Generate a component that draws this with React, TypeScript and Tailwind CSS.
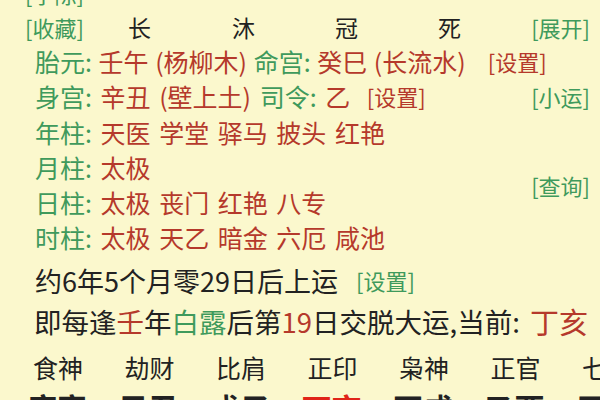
import React from "react";

const G = "text-[#3f9a5c]";
const R = "text-[#b5392b]";
const K = "text-[#222222]";

function Label({ children }: { children: React.ReactNode }) {
  return <span className={G}>{children}</span>;
}

function Red({ children }: { children: React.ReactNode }) {
  return <span className={R}>{children}</span>;
}

function Link({ children, color = G, className = "" }: { children: React.ReactNode; color?: string; className?: string }) {
  return <span className={`${color} text-[22px] ${className}`}>{children}</span>;
}

const shishen = ["食神", "劫财", "比肩", "正印", "枭神", "正官", "七杀"];
const ganzhi = ["庚寅", "己丑", "戊子", "丁亥", "丙戌", "乙酉", "甲申"];

export default function App() {
  return (
    <div
      className="w-[600px] h-[400px] overflow-hidden bg-[#fbf8cd]"
      style={{ fontFamily: '"Noto Sans CJK SC", "Noto Sans", sans-serif' }}
    >
      <div className="-mt-[24px]">
        {/* top links */}
        <div className="h-[34px] pl-[25px] flex items-center leading-none">
          <Link>[字陈]</Link>
        </div>
        <div className="h-[34px] pl-[25px] pr-[10px] flex items-center leading-none">
          <Link className="w-[103px]">[收藏]</Link>
          <div className={`flex ${K} text-[23px]`}>
            <span className="w-[104px]">长</span>
            <span className="w-[103px]">沐</span>
            <span className="w-[103px]">冠</span>
            <span className="w-[90px]">死</span>
          </div>
          <Link className="ml-auto">[展开]</Link>
        </div>

        <div className="pl-[35px] pr-[10px] text-[25px] leading-[35.3px] [word-spacing:3px]">
          <div className="flex items-center whitespace-nowrap [word-spacing:1px]">
            <Label>胎元:</Label>
            <Red>&nbsp;壬午 (杨柳木)&nbsp;</Red>
            <Label>命宫:</Label>
            <Red>&nbsp;癸巳 (长流水)</Red>
            <Link color={R} className="ml-[22px]">[设置]</Link>
          </div>
          <div className="flex items-center whitespace-nowrap">
            <Label>身宫:</Label>
            <Red>&nbsp;辛丑 (壁上土)&nbsp;</Red>
            <Label>司令:</Label>
            <Red>&nbsp;乙&nbsp;</Red>
            <Link color={R} className="ml-[8px]">[设置]</Link>
            <Link className="ml-auto">[小运]</Link>
          </div>
          <div className="whitespace-nowrap">
            <Label>年柱:</Label>
            <Red> 天医 学堂 驿马 披头 红艳</Red>
          </div>
          <div className="flex items-center">
            <div>
              <div>
                <Label>月柱:</Label>
                <Red> 太极</Red>
              </div>
              <div>
                <Label>日柱:</Label>
                <Red> 太极 丧门 红艳 八专</Red>
              </div>
            </div>
            <Link className="ml-auto">[查询]</Link>
          </div>
          <div className="whitespace-nowrap">
            <Label>时柱:</Label>
            <Red> 太极 天乙 暗金 六厄 咸池</Red>
          </div>
        </div>

        <div className={`pl-[35px] h-[50px] flex items-center text-[27px] ${K} whitespace-nowrap`}>
          <span>约6年5个月零29日后上运</span>
          <Link className="ml-[18px]">[设置]</Link>
        </div>
        <div className={`pl-[34px] h-[32px] flex items-center text-[27.5px] ${K} whitespace-nowrap`}>
          <span>即每逢</span>
          <Red>壬</Red>
          <span>年</span>
          <Label>白露</Label>
          <span>后第</span>
          <Red>19</Red>
          <span>日交脱大运,当前:&nbsp;</span>
          <span className={`${R} text-[29px] leading-none ml-[4px]`}>丁亥</span>
        </div>

        <div className={`pl-[33px] pt-[8px] h-[52px] flex items-center text-[25px] ${K} whitespace-nowrap`}>
          {shishen.map((s) => (
            <span key={s} className="w-[91.5px] shrink-0">
              {s}
            </span>
          ))}
        </div>
        <div className="pl-[27px] h-[36px] flex items-center text-[30px] font-bold whitespace-nowrap">
          {ganzhi.map((g) => (
            <span
              key={g}
              className={`w-[91.5px] shrink-0 ${g === "丁亥" ? "text-[#e02418]" : K}`}
            >
              {g}
            </span>
          ))}
        </div>
      </div>
    </div>
  );
}
